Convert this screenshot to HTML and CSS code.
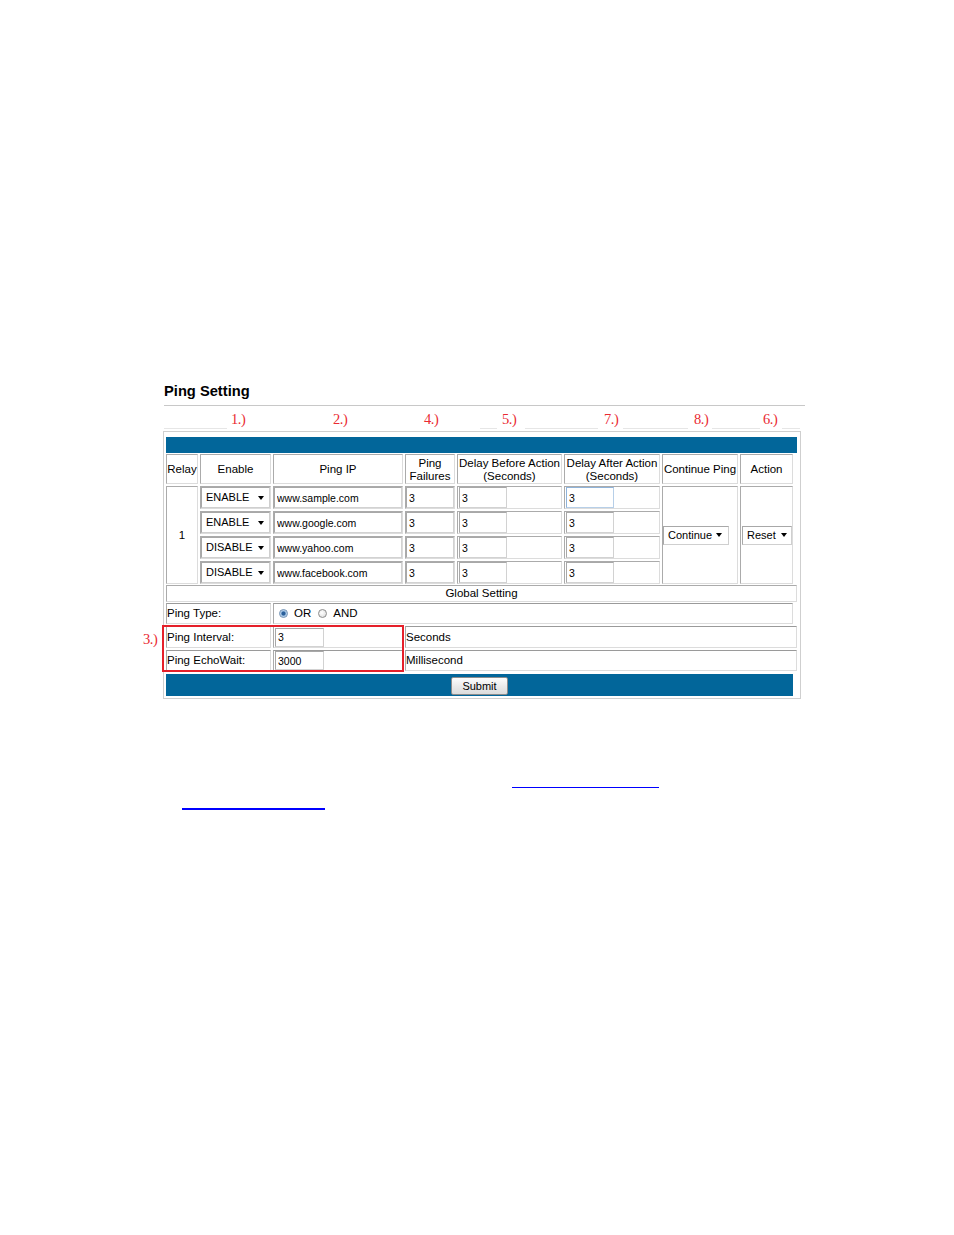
FILE: index.html
```html
<!DOCTYPE html>
<html>
<head>
<meta charset="utf-8">
<title>Ping Setting</title>
<link rel="stylesheet" href="styles.css">
</head>
<body>
<div class="doc">
  <h1 class="title">Ping Setting</h1>
  <div class="rule"></div>
  <div class="nums">
    <span class="seg s1"></span>
    <span class="num n1">1.)</span>
    <span class="num n2">2.)</span>
    <span class="num n4">4.)</span>
    <span class="seg s2"></span>
    <span class="num n5">5.)</span>
    <span class="seg s3"></span>
    <span class="num n7">7.)</span>
    <span class="seg s4"></span>
    <span class="num n8">8.)</span>
    <span class="seg s5"></span>
    <span class="num n6">6.)</span>
    <span class="seg s6"></span>
  </div>

  <div class="shot">
    <div class="bar"></div>
    <div class="grid">
      <div class="c hd">Relay</div>
      <div class="c hd">Enable</div>
      <div class="c hd">Ping IP</div>
      <div class="c hd two">Ping<br>Failures</div>
      <div class="c hd two">Delay Before Action<br>(Seconds)</div>
      <div class="c hd two">Delay After Action<br>(Seconds)</div>
      <div class="c hd">Continue Ping</div>
      <div class="c hd">Action</div>

      <div class="c relay">1</div>
      <div class="c cont"><div class="sel selc"><span>Continue</span><i class="caret"></i></div></div>
      <div class="c act"><div class="sel selr"><span>Reset</span><i class="caret"></i></div></div>

      <div class="c in"><div class="sel sele"><span>ENABLE</span><i class="caret"></i></div></div>
      <div class="c in"><input class="inp full" value="www.sample.com"></div>
      <div class="c in"><input class="inp full" value="3"></div>
      <div class="c in"><input class="inp small" value="3"></div>
      <div class="c in"><input class="inp small focus" value="3"></div>

      <div class="c in"><div class="sel sele"><span>ENABLE</span><i class="caret"></i></div></div>
      <div class="c in"><input class="inp full" value="www.google.com"></div>
      <div class="c in"><input class="inp full" value="3"></div>
      <div class="c in"><input class="inp small" value="3"></div>
      <div class="c in"><input class="inp small" value="3"></div>

      <div class="c in"><div class="sel sele"><span>DISABLE</span><i class="caret"></i></div></div>
      <div class="c in"><input class="inp full" value="www.yahoo.com"></div>
      <div class="c in"><input class="inp full" value="3"></div>
      <div class="c in"><input class="inp small" value="3"></div>
      <div class="c in"><input class="inp small" value="3"></div>

      <div class="c in"><div class="sel sele"><span>DISABLE</span><i class="caret"></i></div></div>
      <div class="c in"><input class="inp full" value="www.facebook.com"></div>
      <div class="c in"><input class="inp full" value="3"></div>
      <div class="c in"><input class="inp small" value="3"></div>
      <div class="c in"><input class="inp small" value="3"></div>
    </div>

    <div class="c global">Global Setting</div>

    <div class="grow type">
      <div class="c lab">Ping Type:</div>
      <div class="c val">
        <span class="radio on"></span><span class="rlab">OR</span>
        <span class="radio"></span><span class="rlab">AND</span>
      </div>
    </div>

    <div class="boxed">
      <div class="grow param p1">
        <div class="c lab">Ping Interval:</div>
        <div class="c pval"><input class="inp pin" value="3"></div>
        <div class="c unit">Seconds</div>
      </div>
      <div class="grow param p2">
        <div class="c lab">Ping EchoWait:</div>
        <div class="c pval"><input class="inp pin" value="3000"></div>
        <div class="c unit">Millisecond</div>
      </div>
      <div class="redbox"></div>
      <div class="num note3">3.)</div>
    </div>

    <div class="submitbar"><button class="btn">Submit</button></div>
  </div>

  <div class="link l1"></div>
  <div class="link l2"></div>
</div>
</body>
</html>
```

FILE: styles.css
```css
html, body {
  margin: 0;
  padding: 0;
  background: #fff;
}
body {
  font-family: "Liberation Sans", Arial, sans-serif;
  color: #000;
}
.doc {
  margin-left: 163px;
  padding-top: 383px;
  padding-bottom: 200px;
}
.title {
  margin: 0 0 0 1px;
  font-size: 14.7px;
  line-height: 17px;
  height: 17px;
  font-weight: bold;
}
.rule {
  margin: 5px 0 0 1px;
  width: 641px;
  height: 1px;
  background: #c8c8c8;
}
.nums {
  display: flex;
  align-items: flex-end;
  height: 23px;
  margin-left: 1px;
}
.seg {
  height: 1px;
  background: #e6e6e6;
  flex: none;
}
.num {
  font-family: "Liberation Serif", "Times New Roman", serif;
  font-size: 14.5px;
  line-height: 18px;
  color: #ea2a32;
  letter-spacing: -0.4px;
  width: 16px;
  flex: none;
  margin-bottom: 1px;
}
.s1 { width: 63px; }
.n1 { margin-left: 4px; }
.n2 { margin-left: 86px; }
.n4 { margin-left: 75px; }
.s2 { margin-left: 40px; width: 17px; }
.n5 { margin-left: 5px; }
.s3 { margin-left: 7px; width: 73px; }
.n7 { margin-left: 6px; }
.s4 { margin-left: 3px; width: 65px; }
.n8 { margin-left: 6px; }
.s5 { margin-left: 2px; width: 48px; }
.n6 { margin-left: 3px; }
.s6 { margin-left: 3px; width: 18px; }

.shot {
  margin-top: 2px;
  width: 638px;
  box-sizing: border-box;
  border: 1px solid #cfcfcf;
  padding: 5px 3px 2px 2px;
  font-size: 11.5px;
}
.bar {
  height: 16px;
  background: #02669a;
}
.grid {
  margin-top: 1px;
  display: grid;
  grid-template-columns: 32px 71px 130px 50px 105px 96px 76px 53px;
  grid-template-rows: 30px repeat(4, 23px);
  gap: 2px;
  width: 627px;
}
.c {
  box-sizing: border-box;
  border: 1px solid;
  border-color: #ababab #dcdcdc #dcdcdc #ababab;
  display: flex;
  align-items: center;
  white-space: nowrap;
  line-height: 13px;
}
.hd {
  justify-content: center;
  text-align: center;
  padding-top: 1px;
}
.relay {
  grid-column: 1;
  grid-row: 2 / span 4;
  justify-content: center;
}
.cont {
  grid-column: 7;
  grid-row: 2 / span 4;
}
.act {
  grid-column: 8;
  grid-row: 2 / span 4;
}
.in {
  padding: 0;
}
.sel {
  box-sizing: border-box;
  display: flex;
  align-items: center;
  justify-content: space-between;
  background: #fff;
  border: 1px solid;
  border-color: #a8a8a8 #cfcfcf #cfcfcf #a8a8a8;
  font-size: 11px;
  padding: 0 5px 0 4px;
}
.sele {
  width: 69px;
  height: 21px;
}
.selc {
  width: 66px;
  height: 19px;
  padding-right: 6px;
}
.selr {
  width: 52px;
  height: 19px;
  margin-left: 1px;
  padding-right: 4px;
}
.caret {
  display: block;
  width: 0;
  height: 0;
  border-left: 3px solid transparent;
  border-right: 3px solid transparent;
  border-top: 4px solid #000;
}
.inp {
  box-sizing: border-box;
  height: 21px;
  margin: 0;
  border: 1px solid;
  border-color: #a8a8a8 #d2d2d2 #d2d2d2 #a8a8a8;
  background: #fff;
  font-family: "Liberation Sans", Arial, sans-serif;
  font-size: 10.5px;
  color: #000;
  padding: 0 2px;
  outline: none;
}
.full {
  width: 100%;
}
.small {
  width: 48px;
  margin-left: 1px;
}
.focus {
  border-color: #8fb3d9 #b7cfe8 #b7cfe8 #8fb3d9;
}

.global {
  margin-top: 1px;
  width: 631px;
  height: 17px;
  justify-content: center;
}
.grow {
  display: flex;
  gap: 2px;
}
.type {
  margin-top: 1px;
  width: 627px;
  height: 21px;
}
.type .c {
  border-top-color: #9a9a9a;
}
.lab {
  width: 105px;
  flex: none;
}
.val {
  flex: 1;
  padding-left: 5px;
}
.radio {
  box-sizing: border-box;
  width: 9px;
  height: 9px;
  border-radius: 50%;
  border: 1px solid #8c8c8c;
  background: radial-gradient(circle at 40% 40%, #ffffff 0, #e4e4e4 70%, #cfcfcf 100%);
  flex: none;
}
.radio.on {
  border-color: #6d8fb3;
  background: radial-gradient(circle, #2a5f99 0, #2a5f99 1.6px, #8fb6dd 2.4px, #e9f1f9 4px);
}
.rlab {
  margin-left: 6px;
  margin-right: 7px;
}
.boxed {
  position: relative;
  margin-top: 2px;
}
.param {
  width: 631px;
  height: 22px;
}
.param .c {
  border-top-color: #9a9a9a;
}
.p2 {
  margin-top: 2px;
  height: 21px;
}
.pval {
  width: 130px;
  flex: none;
  padding-left: 1px;
}
.pin {
  width: 49px;
  height: 19px;
}
.unit {
  flex: 1;
}
.redbox {
  position: absolute;
  left: -4px;
  top: -1px;
  width: 242px;
  height: 47px;
  box-sizing: border-box;
  border: 2px solid #e5202a;
  pointer-events: none;
}
.note3 {
  position: absolute;
  left: -23px;
  top: 4px;
  margin: 0;
}
.submitbar {
  margin-top: 3px;
  width: 627px;
  height: 22px;
  background: #02669a;
  display: flex;
  align-items: center;
  justify-content: center;
}
.btn {
  box-sizing: border-box;
  width: 57px;
  height: 18px;
  margin-top: 1px;
  padding: 0;
  border: 1px solid #8c8c8c;
  border-radius: 2px;
  background: linear-gradient(#fdfdfd, #e9e9e9 55%, #dcdcdc);
  font-family: "Liberation Sans", Arial, sans-serif;
  font-size: 11px;
  color: #000;
}
.link {
  background: #0000ff;
}
.l1 {
  margin-top: 88px;
  margin-left: 349px;
  width: 147px;
  height: 1px;
}
.l2 {
  margin-top: 20px;
  margin-left: 19px;
  width: 143px;
  height: 2px;
}
```
